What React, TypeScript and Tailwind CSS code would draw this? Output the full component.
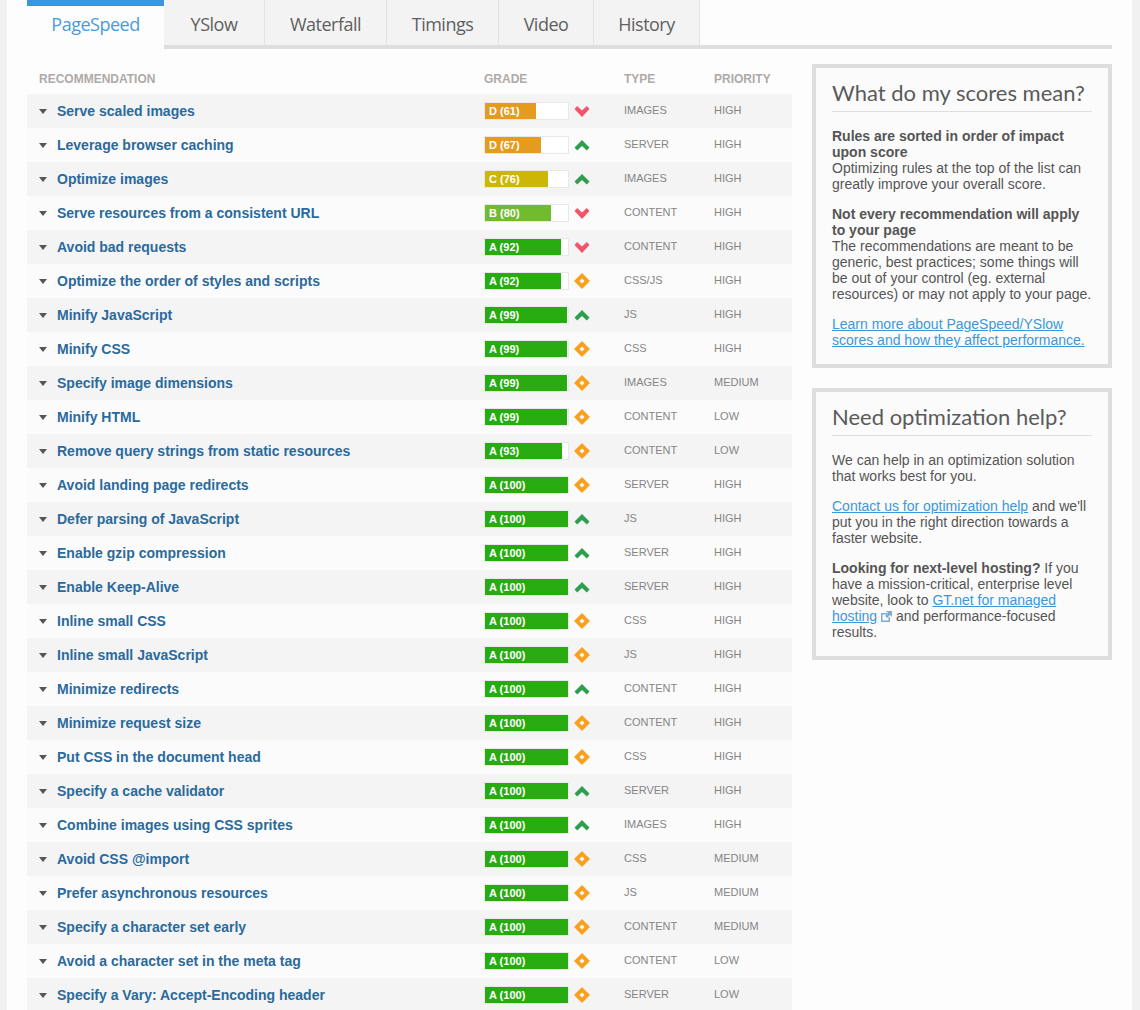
import React from 'react';

type Trend = 'up' | 'down' | 'same';
type Row = [string, string, number, Trend, string, string];

const rows: Row[] = [
  ['Serve scaled images', 'D', 61, 'down', 'IMAGES', 'HIGH'],
  ['Leverage browser caching', 'D', 67, 'up', 'SERVER', 'HIGH'],
  ['Optimize images', 'C', 76, 'up', 'IMAGES', 'HIGH'],
  ['Serve resources from a consistent URL', 'B', 80, 'down', 'CONTENT', 'HIGH'],
  ['Avoid bad requests', 'A', 92, 'down', 'CONTENT', 'HIGH'],
  ['Optimize the order of styles and scripts', 'A', 92, 'same', 'CSS/JS', 'HIGH'],
  ['Minify JavaScript', 'A', 99, 'up', 'JS', 'HIGH'],
  ['Minify CSS', 'A', 99, 'same', 'CSS', 'HIGH'],
  ['Specify image dimensions', 'A', 99, 'same', 'IMAGES', 'MEDIUM'],
  ['Minify HTML', 'A', 99, 'same', 'CONTENT', 'LOW'],
  ['Remove query strings from static resources', 'A', 93, 'same', 'CONTENT', 'LOW'],
  ['Avoid landing page redirects', 'A', 100, 'same', 'SERVER', 'HIGH'],
  ['Defer parsing of JavaScript', 'A', 100, 'up', 'JS', 'HIGH'],
  ['Enable gzip compression', 'A', 100, 'up', 'SERVER', 'HIGH'],
  ['Enable Keep-Alive', 'A', 100, 'up', 'SERVER', 'HIGH'],
  ['Inline small CSS', 'A', 100, 'same', 'CSS', 'HIGH'],
  ['Inline small JavaScript', 'A', 100, 'same', 'JS', 'HIGH'],
  ['Minimize redirects', 'A', 100, 'up', 'CONTENT', 'HIGH'],
  ['Minimize request size', 'A', 100, 'same', 'CONTENT', 'HIGH'],
  ['Put CSS in the document head', 'A', 100, 'same', 'CSS', 'HIGH'],
  ['Specify a cache validator', 'A', 100, 'up', 'SERVER', 'HIGH'],
  ['Combine images using CSS sprites', 'A', 100, 'up', 'IMAGES', 'HIGH'],
  ['Avoid CSS @import', 'A', 100, 'same', 'CSS', 'MEDIUM'],
  ['Prefer asynchronous resources', 'A', 100, 'same', 'JS', 'MEDIUM'],
  ['Specify a character set early', 'A', 100, 'same', 'CONTENT', 'MEDIUM'],
  ['Avoid a character set in the meta tag', 'A', 100, 'same', 'CONTENT', 'LOW'],
  ['Specify a Vary: Accept-Encoding header', 'A', 100, 'same', 'SERVER', 'LOW'],
];

const tabs = [
  { name: 'YSlow', w: 'w-[101px]' },
  { name: 'Waterfall', w: 'w-[122px]' },
  { name: 'Timings', w: 'w-[112px]' },
  { name: 'Video', w: 'w-[95px]' },
  { name: 'History', w: 'w-[106px]' },
];

const gradeColors: Record<string, string> = {
  A: 'bg-[#27ab11]',
  B: 'bg-[#71bb2f]',
  C: 'bg-[#cdb706]',
  D: 'bg-[#e49b1f]',
};

const TrendIcon: React.FC<{ trend: Trend }> = ({ trend }) => {
  if (trend === 'same') {
    return (
      <svg width="16" height="16" viewBox="0 0 16 16" className="block">
        <path d="M8 0 16 8 8 16 0 8Z" fill="#f9a11f" />
        <path d="M8 5.500 10.500 8 8 10.500 5.500 8Z" fill="#fdfdfd" />
      </svg>
    );
  }
  if (trend === 'up') {
    return (
      <svg width="16" height="16" viewBox="0 0 16 16" className="block">
        <path d="M8 3 15.500 10.500 12.800 13.500 8 9 3.200 13.500 .5 10.500Z" fill="#2f9e4f" />
      </svg>
    );
  }
  return (
    <svg width="16" height="16" viewBox="0 0 16 16" className="block">
      <path d="M3.200 3 8 7.500 12.800 3 15.500 6 8 14 .5 6Z" fill="#f0566a" />
    </svg>
  );
};

const ExternalIcon = () => (
  <svg width="11" height="11" viewBox="0 0 11 11" className="inline-block align-[-1px]">
    <path d="M0 2h6v1.500H1.500v6h6V6H9v5H0Z" fill="#7fabd0" />
    <path d="M5 0h6v6L9 4 6 7 4 5l3-3Z" fill="#7fabd0" />
  </svg>
);

const A: React.FC<{ children: React.ReactNode }> = ({ children }) => (
  <a className="text-[#3b97dd] underline">{children}</a>
);

const App: React.FC = () => {
  return (
    <div className="h-[1010px] overflow-hidden bg-[#f1f1f1] pl-[7px] pr-[8px] font-['Liberation_Sans',Arial,sans-serif]">
      <div className="h-full bg-[#fdfdfd] pl-[20px] pr-[20px]">
        {/* Tabs */}
        <div className="flex h-[49px] border-b-4 border-[#dedede]">
          <div className="-mb-[4px] h-[49px] w-[137px] border-t-[6px] border-[#3b97dd] bg-[#fdfdfd] pt-[5px] text-center font-['Open_Sans',sans-serif] text-[18px] tracking-[-0.5px] text-[#4a9bdc]">
            PageSpeed
          </div>
          {tabs.map(t => (
            <div
              key={t.name}
              className={`${t.w} h-[45px] border-r border-[#e2e2e2] bg-[#f3f3f3] pt-[11px] text-center font-['Open_Sans',sans-serif] text-[18px] tracking-[-0.5px] text-[#5f5f5f]`}
            >
              {t.name}
            </div>
          ))}
        </div>

        <div className="flex gap-[20px]">
          {/* Table */}
          <div className="w-[765px] shrink-0">
            <div className="flex h-[45px] items-end pb-[8px] text-[12px] font-bold leading-[14px] text-[#aeaaa8]">
              <div className="w-[457px] pl-[12px]">RECOMMENDATION</div>
              <div className="w-[140px]">GRADE</div>
              <div className="w-[90px]">TYPE</div>
              <div>PRIORITY</div>
            </div>
            {rows.map((r, i) => (
              <div
                key={r[0]}
                className={`flex h-[34px] items-center ${i % 2 === 0 ? 'bg-[#f4f4f4]' : 'bg-[#fbfbfb]'}`}
              >
                <div className="flex w-[457px] items-center pl-[12px]">
                  <span className="mr-[10px] h-0 w-0 border-x-[4px] border-t-[5px] border-x-transparent border-t-[#555]" />
                  <span className="text-[14px] font-bold text-[#2a6a9c]">{r[0]}</span>
                </div>
                <div className="flex w-[140px] items-center">
                  <div className="h-[18px] w-[85px] border border-[#e8e8e8] bg-white">
                    <div
                      className={`flex h-full items-center pl-[4px] text-[11px] font-bold text-white ${gradeColors[r[1]]}`}
                      style={{ width: `${r[2]}%` }}
                    >
                      <span className="whitespace-nowrap">{r[1]} ({r[2]})</span>
                    </div>
                  </div>
                  <span className="ml-[5px]">
                    <TrendIcon trend={r[3]} />
                  </span>
                </div>
                <div className="w-[90px] pb-[2px] text-[11px] text-[#858585]">{r[4]}</div>
                <div className="pb-[2px] text-[11px] text-[#858585]">{r[5]}</div>
              </div>
            ))}
          </div>

          {/* Sidebar */}
          <div className="w-[300px] pt-[15px] text-[14px] leading-[16px] text-[#555]">
            <div className="border-4 border-[#dedede] bg-[#fbfbfb] px-[16px] pb-[16px] pt-[11px]">
              <h2 className="whitespace-nowrap border-b border-[#dedede] pb-[4px] font-['Lato',sans-serif] text-[22px] leading-[28px] text-[#5a5a5a]">
                What do my scores mean?
              </h2>
              <p className="mt-[16px]">
                <b>Rules are sorted in order of impact upon score</b>
                <br />
                Optimizing rules at the top of the list can greatly improve your overall score.
              </p>
              <p className="mt-[14px]">
                <b>Not every recommendation will apply to your page</b>
                <br />
                The recommendations are meant to be generic, best practices; some things will be out of your control (eg. external resources) or may not apply to your page.
              </p>
              <p className="mt-[14px]">
                <A>Learn more about PageSpeed/YSlow scores and how they affect performance.</A>
              </p>
            </div>
            <div className="mt-[20px] border-4 border-[#dedede] bg-[#fbfbfb] px-[16px] pb-[16px] pt-[11px]">
              <h2 className="whitespace-nowrap border-b border-[#dedede] pb-[4px] font-['Lato',sans-serif] text-[22px] leading-[28px] text-[#5a5a5a]">
                Need optimization help?
              </h2>
              <p className="mt-[16px]">We can help in an optimization solution that works best for you.</p>
              <p className="mt-[14px]">
                <A>Contact us for optimization help</A> and we'll put you in the right direction towards a faster website.
              </p>
              <p className="mt-[14px]">
                <b>Looking for next-level hosting?</b> If you have a mission-critical, enterprise level website, look to <A>GT.net for managed hosting</A> <ExternalIcon /> and performance-focused results.
              </p>
            </div>
          </div>
        </div>
      </div>
    </div>
  );
};

export default App;
